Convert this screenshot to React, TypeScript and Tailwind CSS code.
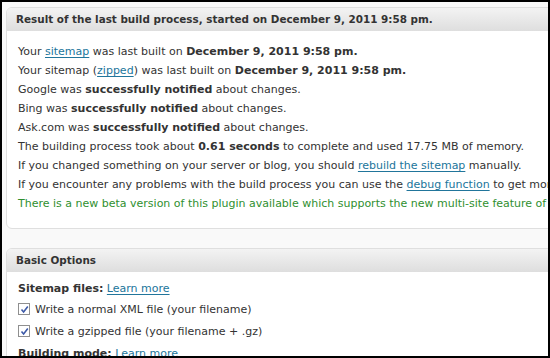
import React from 'react';

const Link = ({ children }: { children: React.ReactNode }) => (
  <a href="#" className="text-[#21759b] underline underline-offset-2">
    {children}
  </a>
);

const Check = ({ label }: { label: string }) => (
  <div className="flex h-[22px] items-center gap-[5px]">
    <span className="flex h-[12px] w-[12px] items-center justify-center border border-[#8f8f8f] bg-white">
      <svg width="9" height="9" viewBox="0 0 9 9">
        <path d="M1.5 4.5 L3.6 7 L7.8 1.5" fill="none" stroke="#3d5aa8" strokeWidth="1.6" />
      </svg>
    </span>
    <span>{label}</span>
  </div>
);

const Panel = ({ title, children, className }: { title: string; children: React.ReactNode; className?: string }) => (
  <div className={`w-[720px] overflow-hidden rounded-[6px] border border-[#dfdfdf] bg-white ${className ?? ''}`}>
    <div className="flex h-[23px] items-center bg-gradient-to-b from-[#f3f3f3] to-[#dedede] px-[9px] text-[10.4px] font-bold text-[#333]">
      {title}
    </div>
    {children}
  </div>
);

export default function App() {
  return (
    <div
      className="h-[358px] w-[550px] overflow-hidden border-2 border-black bg-[#f9f9f9] pl-[4px] pt-[5px] text-[11px] whitespace-nowrap text-[#333]"
      style={{ fontFamily: '"DejaVu Sans", Verdana, sans-serif' }}
    >
      <Panel title="Result of the last build process, started on December 9, 2011 9:58 pm.">
        <div className="px-[11px] pt-[11px] pb-[15px] leading-[19px]">
          <p>Your <Link>sitemap</Link> was last built on <b>December 9, 2011 9:58 pm.</b></p>
          <p>Your sitemap (<Link>zipped</Link>) was last built on <b>December 9, 2011 9:58 pm.</b></p>
          <p>Google was <b>successfully notified</b> about changes.</p>
          <p>Bing was <b>successfully notified</b> about changes.</p>
          <p>Ask.com was <b>successfully notified</b> about changes.</p>
          <p>The building process took about <b>0.61 seconds</b> to complete and used 17.75 MB of memory.</p>
          <p>If you changed something on your server or blog, you should <Link>rebuild the sitemap</Link> manually.</p>
          <p>If you encounter any problems with the build process you can use the <Link>debug function</Link> to get more information.</p>
          <p className="text-[#2f8f2f]">There is a new beta version of this plugin available which supports the new multi-site feature of WordPress.</p>
        </div>
      </Panel>
      <Panel title="Basic Options" className="mt-[19px]">
        <div className="px-[11px] pt-[7px] leading-[19px]">
          <p><b>Sitemap files:</b> <Link>Learn more</Link></p>
          <Check label="Write a normal XML file (your filename)" />
          <Check label="Write a gzipped file (your filename + .gz)" />
          <p className="mt-[2px]"><b>Building mode:</b> <Link>Learn more</Link></p>
        </div>
      </Panel>
    </div>
  );
}
